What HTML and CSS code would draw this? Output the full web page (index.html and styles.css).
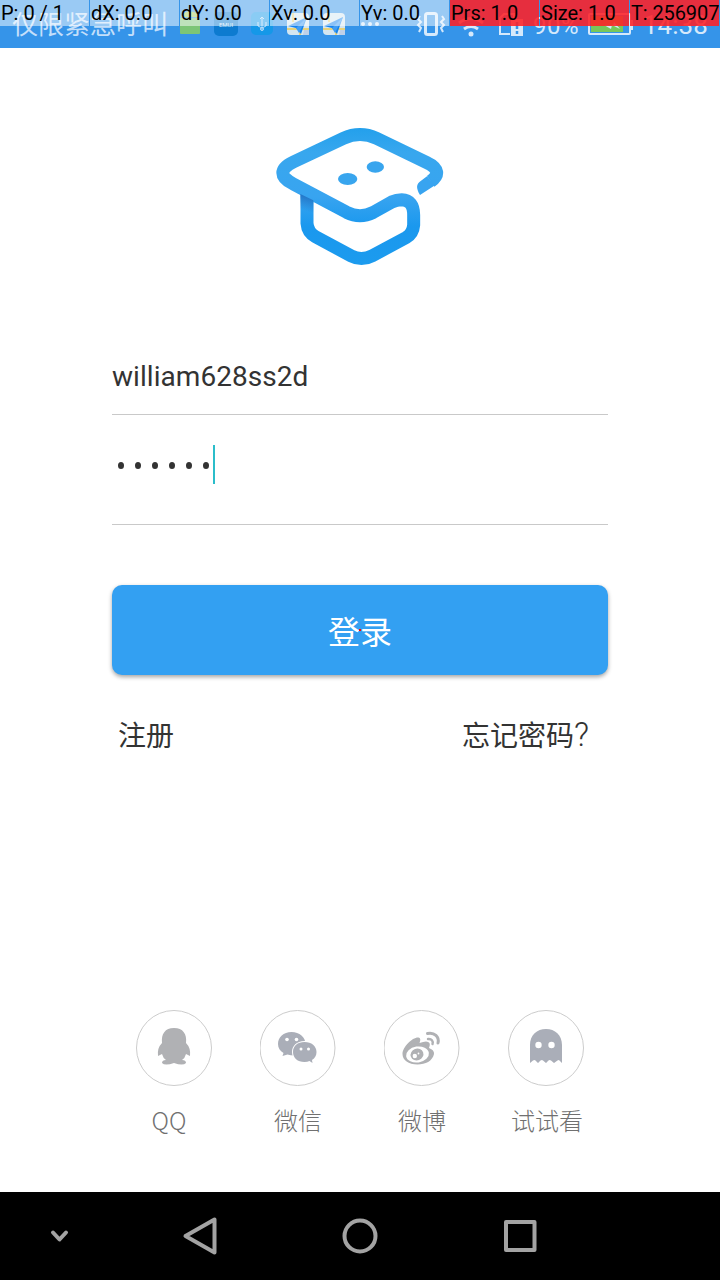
FILE: index.html
```html
<!DOCTYPE html>
<html lang="zh-CN">
<head>
<meta charset="utf-8">
<title>登录</title>
<link rel="stylesheet" href="styles.css">
</head>
<body>
<div class="screen">
  <header class="status">
    <span class="carrier">仅限紧急呼叫</span>
    <svg class="status-icons" width="540" height="48" viewBox="180 0 540 48">
      <path d="M180 18h20v15q0 1-1 1h-18q-1 0-1-1z" fill="#7cc576"/>
      <path d="M181 17a9.500 8 0 0 1 18 0z" fill="#a5c85a"/>
      <rect x="214" y="12" width="24" height="24" rx="5" fill="#0d7bd0"/>
      <text x="226" y="27" class="emui">EMUI</text>
      <rect x="251" y="12" width="22" height="23" rx="5" fill="#1598e8"/>
      <path d="M262 18v12M258 22v4l4 2 4-2v-4M260 19l2-2 2 2" fill="none" stroke="#b8dcf8" stroke-width="1"/>
      <circle cx="262" cy="29" r="1.500" fill="none" stroke="#b8dcf8"/>
      <g id="plane">
        <rect x="287" y="13" width="22" height="22" rx="4" fill="#d4e6f0"/>
        <path d="M287 29h22M300 29v6M293 13v9" stroke="#e7d27a" stroke-width="2"/>
        <path d="M304 30h5v5h-6z" fill="#bfd0e8"/>
        <path d="M288 26L307 17 301 34 296 28z" fill="#1583ee"/>
        <path d="M296 28L307 17 299 33z" fill="#3f9df4"/>
      </g>
      <use href="#plane" x="36"/>
      <g fill="#d5e9fb">
        <circle cx="363" cy="24" r="2"/><circle cx="370" cy="24" r="2"/><circle cx="377" cy="24" r="2"/>
        <circle cx="471" cy="34" r="2.500"/>
      </g>
      <g fill="none" stroke="#d5e9fb" stroke-width="3">
        <rect x="425.500" y="13.500" width="11" height="21" rx="2"/>
        <path d="M420 16l-2 3 3 3-3 3 3 3-2 4M442 16l2 3-3 3 3 3-3 3 2 4" stroke-width="2"/>
        <path d="M464 29q7-5 14 0M459 23q12-9 24 0"/>
        <path d="M510 34h-10V18l4-4h10v5" stroke-width="2"/>
      </g>
      <path d="M511 19h12v17h-12z" fill="#d5e9fb"/>
      <path d="M517 22v7M517 31v3" stroke="#3594e9" stroke-width="2.500"/>
      <text x="533" y="34" class="battery-text">90%</text>
      <rect x="589" y="14" width="41" height="20" rx="1" fill="none" stroke="#d5e9fb" stroke-width="2"/>
      <rect x="591" y="16" width="32" height="16" fill="#78c75a"/>
      <path d="M630 20h3v10h-3z" fill="#d5e9fb"/>
      <path d="M604 25l7 4 1-4 8 4-6-7-1 4z" fill="#d5e9fb"/>
      <text x="643" y="34" class="clock">14:38</text>
    </svg>
    <div class="pointer">
      <span>P: 0 / 1</span><span>dX: 0.0</span><span>dY: 0.0</span><span>Xv: 0.0</span><span>Yv: 0.0</span><span class="hot">Prs: 1.0</span><span class="hot">Size: 1.0</span><span class="hot">T: 256907</span>
    </div>
  </header>

  <main class="login">
    <svg class="logo" width="200" height="170" viewBox="0 0 600 510">
      <defs>
        <linearGradient id="brand" gradientUnits="userSpaceOnUse" x1="0" y1="54" x2="0" y2="466">
          <stop offset="0" stop-color="#23a0ec"/><stop offset=".18" stop-color="#38a7ee"/>
          <stop offset=".5" stop-color="#38a4f0"/><stop offset=".72" stop-color="#1a98ee"/><stop offset="1" stop-color="#1c9bee"/>
        </linearGradient>
        <linearGradient id="shade" gradientUnits="userSpaceOnUse" x1="153" y1="262" x2="141" y2="304">
          <stop offset="0" stop-color="#2377c8"/><stop offset="1" stop-color="#2377c8" stop-opacity="0"/>
        </linearGradient>
      </defs>
      <path d="M141 255V340Q143 367 166 380L274 438Q305 454 337 437L438 383Q459 371 461 345V315Q461 270 425 269Q410 269 395 276L340 307Q300 327 260 307L100 222C58 201 58 176 100 156L250 85Q300 62 350 85L499 157C540 176 536 197 512 214" fill="none" stroke="url(#brand)" stroke-width="39"/>
      <path d="M121 252L160 271V315H122z" fill="url(#shade)"/>
      <path d="M480 255C467 232 469 222 483 212L501 199L525 226z" fill="#38a4f0"/>
      <ellipse cx="263" cy="207" rx="29" ry="18" fill="#38a5ee"/>
      <ellipse cx="346" cy="171" rx="26" ry="17" fill="#38a5ee"/>
    </svg>

    <form class="form">
      <div class="field user">william628ss2d</div>
      <div class="field password"><i></i><i></i><i></i><i></i><i></i><i></i><b class="caret"></b></div>
      <button type="button" class="submit">登录</button>
      <div class="links"><span>注册</span><span>忘记密码<span class="mark">?</span></span></div>
    </form>

    <div class="social">
      <div class="provider qq">
        <svg width="76" height="76" viewBox="0 0 76 76"><circle cx="38" cy="38" r="37.500" class="ring"/>
          <path d="M38 18C29 18 25 24 26 33Q21 38 22 46L26 44Q27 48 30 50Q26 50 26 53Q29 56 38 53Q47 56 50 53Q50 50 46 50Q49 48 50 44L54 46Q55 38 50 33C51 24 47 18 38 18z" fill="#b0b1b4"/></svg>
        <span>QQ</span>
      </div>
      <div class="provider">
        <svg width="76" height="76" viewBox="0.500 0 76 76"><circle cx="38" cy="38" r="37.500" class="ring"/>
          <path d="M32 22C24 22 18.500 27 18.500 34C18.500 38 20.500 41 24 43L23 46L28 44.500Q31 45.500 35 45.500C41 44 46 40 46 34C46 27 40 22 32 22z" fill="#aaaeb8"/>
          <path d="M45 31C37 31 32.500 36 32.500 42C32.500 49 38 53 45 53L51 52L56 54V50Q58 46 58 42C58 35 52 31 45 31z" fill="#fff"/>
          <path d="M45 32C38 32 33.500 36 33.500 42C33.500 48 38 52 45 52Q48 52 50 51L53 53L52.500 50C55.500 48 57 45.500 57 42C57 36 52 32 45 32z" fill="#aaaeb8"/>
          <g fill="#fff"><circle cx="27.500" cy="29.500" r="1.800"/><circle cx="37" cy="29.500" r="1.800"/><circle cx="41.500" cy="39" r="1.500"/><circle cx="49" cy="39" r="1.500"/></g></svg>
        <span>微信</span>
      </div>
      <div class="provider">
        <svg width="76" height="76" viewBox="0.500 0 76 76"><circle cx="38" cy="38" r="37.500" class="ring"/>
          <path d="M35 27.500Q38 28 36 33Q44 30 46 33Q47 35 45.500 38Q51 40 50.500 44C49 51 42 54.500 34 54.500C25 54.500 19 50 19 44C19 37 29 27 35 27.500z" fill="#b0b1b4"/>
          <ellipse cx="34" cy="44.500" rx="11.500" ry="8" transform="rotate(-9 34 44.500)" fill="#fff"/>
          <ellipse cx="33.500" cy="44.500" rx="6.500" ry="5.800" transform="rotate(-20 33.500 44.500)" fill="#b0b1b4"/>
          <circle cx="31.300" cy="46" r="2.200" fill="#fff"/><circle cx="35" cy="43.500" r=".9" fill="#fff"/>
          <path d="M44 23.500C51 22 56 27 54.500 33" fill="none" stroke="#b0b1b4" stroke-width="3" stroke-linecap="round"/>
          <path d="M44.500 29C48 28.500 50 31 49 34" fill="none" stroke="#b0b1b4" stroke-width="2.400" stroke-linecap="round"/></svg>
        <span>微博</span>
      </div>
      <div class="provider guest">
        <svg width="76" height="76" viewBox="0 0 76 76"><circle cx="38" cy="38" r="37.500" class="ring"/>
          <path d="M22 53V35C22 25 29 19 38 19C47 19 54 25 54 35V53L51.500 50.500Q50.500 49.700 49.500 50.500L46 53L43 50.500Q41.500 49.500 40.500 50.500L38 53L35 50.500Q34 49.500 32.500 50.500L30 53L27.500 50.500Q26.500 49.500 25 50.500z" fill="#aaaeb8"/>
          <circle cx="30.500" cy="35" r="3.200" fill="#fff"/><circle cx="43.500" cy="35" r="3.200" fill="#fff"/></svg>
        <span>试试看</span>
      </div>
    </div>
  </main>

  <nav class="navbar">
    <svg width="720" height="88" viewBox="0 0 720 88" fill="none" stroke="#a3a3a3" stroke-width="4" stroke-linejoin="round">
      <path d="M53 40.500L59.500 47.500L66 40.500" stroke-linecap="round"/>
      <path d="M214.500 27.500V60.500L185.500 44z"/>
      <circle cx="360" cy="44" r="15.500"/>
      <rect x="506" y="30" width="28.500" height="28"/>
    </svg>
  </nav>
</div>
</body>
</html>
```
FILE: styles.css
```css
* { box-sizing: border-box; }
body { margin: 0; background: #fff; font-family: Roboto, "Noto Sans CJK SC", sans-serif; }
.screen { width: 720px; height: 1280px; display: flex; flex-direction: column; overflow: hidden; background: #fff; }

.status { position: relative; flex: none; display: flex; height: 48px; background: #3594e9; }
.carrier { width: 168px; padding-left: 12px; margin-right: 12px; font-size: 26px; line-height: 50px; white-space: nowrap; color: #c3dffa; }
.status-icons { flex: none; font-family: Roboto, sans-serif; fill: #d5e9fb; }
.emui { font-size: 6px; text-anchor: middle; }
.battery-text { font-size: 24px; letter-spacing: .5px; }
.clock { font-size: 26px; }
.pointer { position: absolute; left: 0; top: 0; width: 720px; display: grid; grid-template-columns: repeat(8, 89px); column-gap: 1px; height: 26px; }
.pointer span { padding-left: 1px; font-size: 20px; line-height: 26px; white-space: nowrap; color: #000; background: rgba(255, 255, 255, .5); }
.pointer .hot { background: rgba(255, 32, 38, .88); }
.pointer span:last-child { letter-spacing: -.1px; }

.login { flex: 1; display: flex; flex-direction: column; align-items: center; padding-top: 62px; }
.logo { display: block; flex: none; }
.form { width: 496px; margin-top: 58px; display: flex; flex-direction: column; }
.field { border-bottom: 1px solid #c9c9c9; color: #333; font-size: 28px; }
.user { height: 77px; line-height: 78px; letter-spacing: .05px; }
.password { height: 110px; display: flex; align-items: flex-start; gap: 11px; padding: 30px 0 0 6px; }
.password i { width: 6px; height: 7px; margin-top: 17px; border-radius: 50%; background: #333; }
.caret { width: 2px; height: 39px; margin-left: -7px; background: #2bbdca; }
.submit { position: relative; height: 90px; margin-top: 60px; padding: 0; border: 0; border-radius: 10px; background: #33a0f2; color: #fff; font: 32px Roboto, "Noto Sans CJK SC", sans-serif; box-shadow: 0 2px 4px rgba(0, 0, 0, .36); }
.submit::after { content: ""; position: absolute; left: 247px; top: 44px; width: 2px; height: 2px; background: #f00; }
.links { display: flex; justify-content: space-between; margin-top: 43px; padding: 0 17px 0 6px; font-size: 28px; line-height: 38px; color: #333; }
.mark { display: inline-block; width: 17px; font-size: 33px; font-weight: 300; line-height: 30px; }
.social { display: flex; gap: 48px; margin-top: 254px; }
.provider { display: flex; flex-direction: column; align-items: center; gap: 17px; width: 76px; color: #707070; font: 300 24px/33px "Noto Sans CJK SC", sans-serif; white-space: nowrap; }
.provider svg { display: block; }
.qq span { margin-right: 10px; }
.guest span { margin-left: 2px; }
.ring { fill: #fff; stroke: #ccc; stroke-width: 1; }
.navbar { flex: none; height: 88px; background: #000; }
.navbar svg { display: block; }
```
